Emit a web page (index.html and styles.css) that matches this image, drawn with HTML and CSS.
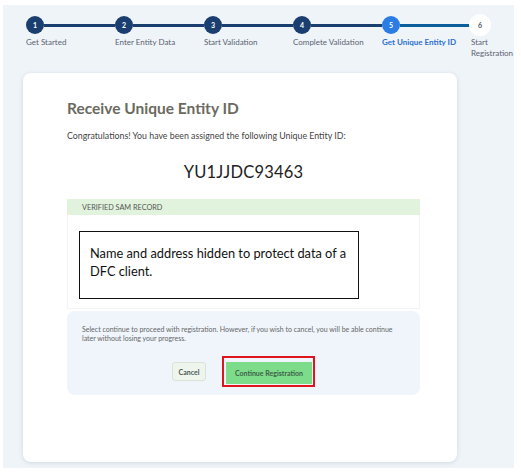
FILE: index.html
```html
<!DOCTYPE html>
<html lang="en">
<head>
  <meta charset="UTF-8">
  <title>Receive Unique Entity ID</title>
  <link rel="stylesheet" href="styles.css">
</head>
<body>

<div class="page">
  <div class="stepper">
    <div class="step done">
      <div class="step-track"><span class="dot">1</span><span class="bar"></span></div>
      <div class="step-label">Get Started</div>
    </div>
    <div class="step done">
      <div class="step-track"><span class="dot">2</span><span class="bar"></span></div>
      <div class="step-label">Enter Entity Data</div>
    </div>
    <div class="step done">
      <div class="step-track"><span class="dot">3</span><span class="bar"></span></div>
      <div class="step-label">Start Validation</div>
    </div>
    <div class="step done">
      <div class="step-track"><span class="dot">4</span><span class="bar"></span></div>
      <div class="step-label">Complete Validation</div>
    </div>
    <div class="step current">
      <div class="step-track"><span class="dot">5</span><span class="bar"></span></div>
      <div class="step-label">Get Unique Entity ID</div>
    </div>
    <div class="step todo last">
      <div class="step-track"><span class="dot">6</span></div>
      <div class="step-label">Start<br>Registration</div>
    </div>
  </div>

  <div class="card">
    <h1>Receive Unique Entity ID</h1>
    <p class="intro">Congratulations! You have been assigned the following Unique Entity ID:</p>
    <div class="uei">YU1JJDC93463</div>

    <div class="record">
      <div class="record-head">VERIFIED SAM RECORD</div>
      <div class="record-body">
        <div class="redacted">Name and address hidden to protect data of a DFC client.</div>
      </div>
    </div>

    <div class="actions">
      <p>Select continue to proceed with registration. However, if you wish to cancel, you will be able continue later without losing your progress.</p>
      <div class="buttons">
        <button class="btn btn-cancel">Cancel</button>
        <span class="highlight"><button class="btn btn-continue">Continue Registration</button></span>
      </div>
    </div>
  </div>
</div>

</body>
</html>
```

FILE: styles.css
```css
body { margin:0; background:#fff; font-family:'Lato',sans-serif; color:#333; }
.page { margin:5px 7px 8px 3px; height:463px; background:#eff4f9; box-sizing:border-box; padding:11px 0 0 20px; overflow:hidden; }

.stepper { display:flex; padding-left:3px; }
.step { width:89px; flex:none; }
.step.last { width:40px; }
.step-track { display:flex; align-items:center; height:18px; }
.dot { width:18px; height:18px; border-radius:50%; background:#1b3e70; color:#fff; font-size:7px; font-weight:bold; display:flex; align-items:center; justify-content:center; flex:none; }
.bar { flex:1; height:3px; background:#1b3e70; }
.current .dot { background:#2b7de3; }
.current .bar { background:#0b5e9c; }
.todo .dot { background:#fff; color:#555; box-shadow:0 0 0 2px #fff; }
.step-label { margin-top:3px; font-size:8px; color:#5b6270; line-height:11px; }
.current .step-label { color:#2b6fd1; font-weight:bold; }

.card { width:434px; height:389px; margin-top:14px; background:#fff; border-radius:8px; box-shadow:0 1px 4px rgba(120,140,160,0.25); box-sizing:border-box; padding:25px 37px 0 44px; }
.card h1 { margin:0; font-size:15.5px; line-height:20px; color:#6b6a60; font-weight:bold; }
.intro { margin:12px 0 0; font-size:8.8px; color:#444; }
.uei { margin-top:21px; text-align:center; font-size:16.5px; color:#222; letter-spacing:0.2px; }

.record { margin-top:17px; }
.record-head { background:#e2f3dd; font-size:7.3px; line-height:9px; color:#555; padding:3.5px 15px; }
.record-body { border:1px solid #f2f4f6; border-top:none; padding:16px 60px 9px 11px; }
.redacted { border:1.5px solid #111; height:68px; box-sizing:border-box; padding:12px 10px; font-family:'Lato',sans-serif; font-size:12.8px; line-height:18px; color:#111; }

.actions { margin-top:2px; background:#eff5fb; border-radius:8px; padding:14px 15px 8px; }
.actions p { margin:0; font-size:7px; color:#666; line-height:8.5px; padding-right:10px; }
.buttons { display:flex; justify-content:center; align-items:center; gap:16px; margin-top:14px; }
.btn { font-family:inherit; font-size:7px; font-weight:bold; border-radius:3px; cursor:pointer; }
.btn-cancel { background:#eef5ec; border:1px solid #d9e4d8; color:#4e5a55; padding:5px 6px; height:19px; }
.highlight { display:inline-block; border:2.5px solid #e0141b; padding:1.5px; }
.btn-continue { background:#7cdc8a; border:none; color:#3f6249; padding:0 9px; height:22px; border-radius:0; }
```
